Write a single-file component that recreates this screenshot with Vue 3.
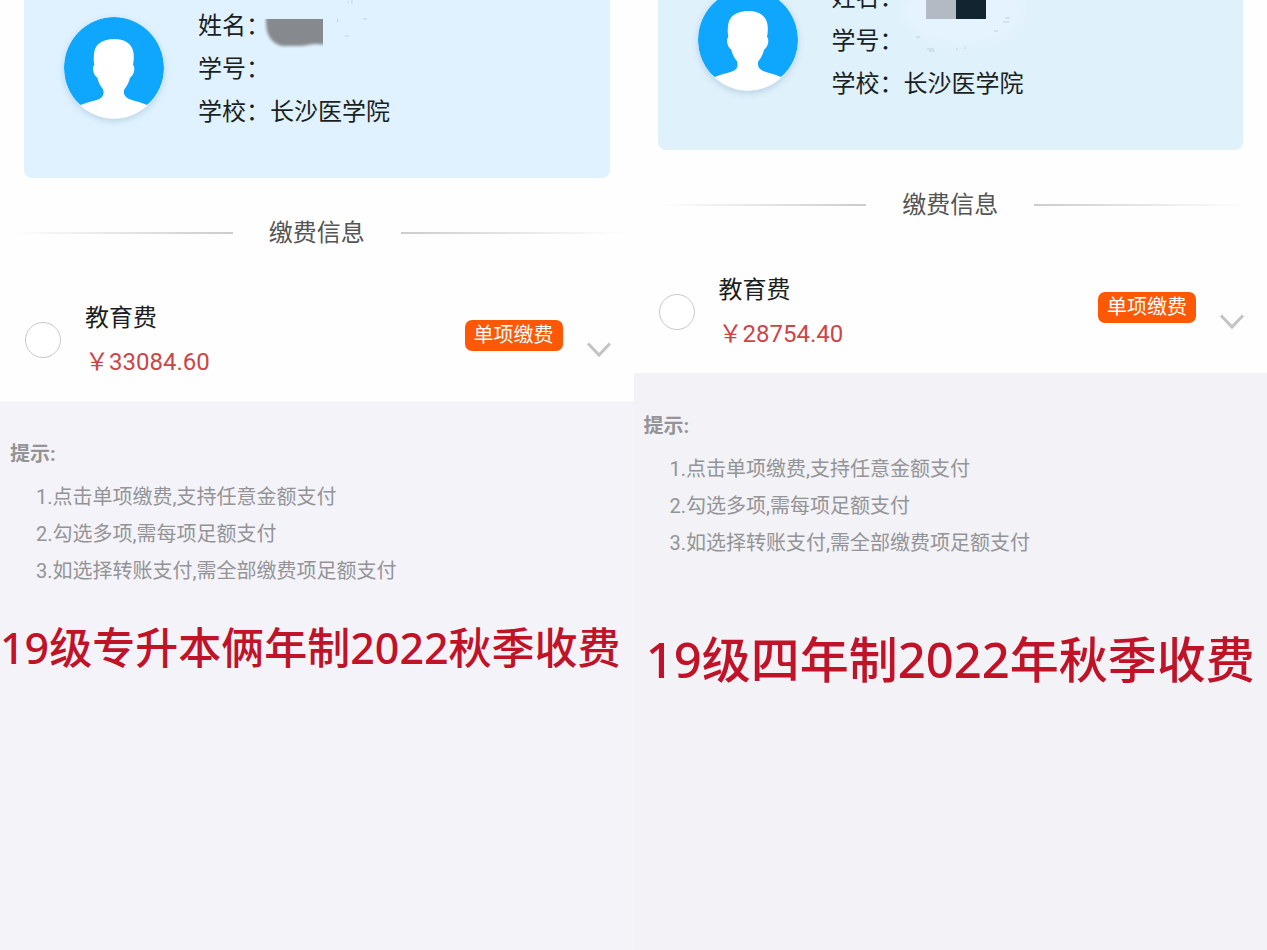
<script setup>
import { reactive } from 'vue'

const tips = [
  '1.点击单项缴费,支持任意金额支付',
  '2.勾选多项,需每项足额支付',
  '3.如选择转账支付,需全部缴费项足额支付',
]

const panels = reactive([
  { id: 'upgrade', price: '33084.60', checked: false, note: '19级专升本俩年制2022秋季收费' },
  { id: 'regular', price: '28754.40', checked: false, note: '19级四年制2022年秋季收费' },
])
</script>

<template>
  <main class="compare">
    <section v-for="p in panels" :key="p.id" class="panel" :class="p.id">
      <div class="sheet">
        <header class="card">
          <div class="profile">
            <svg class="avatar" viewBox="0 0 300 306" aria-hidden="true">
              <ellipse cx="150" cy="153" rx="149" ry="152" fill="#fff" />
              <path
                d="M50 264C18 236 0 196 0 152C0 68 68 0 150 0S300 68 300 152C300 196 281 236 249 264C232 257 212 252 195 246C182 240 177 230 181 217C189 207 195 196 198 182C205 178 211 168 211 156C211 149 209 146 207 144C210 130 210 116 208 104C203 79 181 66 150 66C118 66 94 81 91 104C89 116 88 130 91 144C88 147 87 150 87 156C88 169 93 178 100 182C103 196 109 207 117 217C121 230 118 240 106 246C89 252 68 256 50 264Z"
                fill="#0ea7fd"
              />
            </svg>
            <dl class="facts">
              <div class="fact">
                <dt>姓名：</dt>
                <dd>
                  <svg v-if="p.id === 'upgrade'" class="mask" width="190" height="60" viewBox="0 0 190 60" aria-hidden="true">
                    <defs>
                      <filter id="soften" x="-20%" y="-20%" width="140%" height="140%">
                        <feGaussianBlur stdDeviation="1.6" />
                      </filter>
                      <clipPath id="smudge"><path d="M0 19H59V60H0Z" /></clipPath>
                    </defs>
                    <g clip-path="url(#smudge)">
                      <path d="M2 12H70V45L50 44Q44 45 38 46H18Q2 42 2 22Z" fill="#868a8e" filter="url(#soften)" />
                    </g>
                    <path d="M81 36h4M99 19h4M84 1v2M88 0v4M73 22l1-3" fill="none" stroke="#c3d2dd" stroke-width="1" />
                  </svg>
                  <svg v-else class="mask" width="190" height="60" viewBox="0 0 190 60" aria-hidden="true">
                    <defs>
                      <filter id="fade" x="-20%" y="-20%" width="140%" height="140%">
                        <feGaussianBlur stdDeviation="5" />
                      </filter>
                    </defs>
                    <ellipse cx="65" cy="12" rx="62" ry="34" fill="#e4f3fd" filter="url(#fade)" />
                    <path d="M28 0H58V19H28Z" fill="#b3bac4" />
                    <path d="M58 0H88V19H58Z" fill="#11242f" />
                    <path d="M29 49h7M31 51h6M18 37h4M96 31h4M105 22h6M107 18h5M58 49h2M66 48h2" fill="none" stroke="#c0d0da" stroke-width="1" />
                  </svg>
                </dd>
              </div>
              <div class="fact"><dt>学号：</dt><dd></dd></div>
              <div class="fact"><dt>学校：</dt><dd>长沙医学院</dd></div>
            </dl>
          </div>
        </header>

        <h2 class="divider">缴费信息</h2>

        <div class="item">
          <input :id="p.id + '-fee'" v-model="p.checked" class="check" type="checkbox" />
          <label class="fee" :for="p.id + '-fee'">
            <span class="fee-name">教育费</span>
            <span class="fee-price">￥{{ p.price }}</span>
          </label>
          <button class="pay" type="button">单项缴费</button>
          <button class="expand" type="button" aria-label="展开">
            <svg width="24" height="16" viewBox="0 0 24 16" aria-hidden="true">
              <path d="M1 1.5L12 13L23 1.5" fill="none" stroke="#c3c3c3" stroke-width="3" />
            </svg>
          </button>
        </div>
      </div>

      <div class="tips">
        <h3>提示:</h3>
        <ul>
          <li v-for="t in tips" :key="t">{{ t }}</li>
        </ul>
      </div>

      <p class="note">{{ p.note }}</p>
    </section>
  </main>
</template>

<style>
body {
  margin: 0;
}
</style>

<style scoped>
.compare {
  display: grid;
  grid-template-columns: 1fr 1fr;
  min-height: 100vh;
  font-family: Roboto, "Noto Sans CJK SC", sans-serif;
  font-size: 24px;
  color: #1b1f22;
}
.panel {
  min-width: 0;
  overflow: hidden;
  background: #f4f3f9;
}
.regular {
  background: #f2f2f7;
}
.sheet {
  background: #fefefe;
  padding-bottom: 17px;
}
.card {
  display: flex;
  align-items: flex-end;
  height: 178px;
  box-sizing: border-box;
  margin: 0 24px;
  padding: 0 40px 44px;
  overflow: hidden;
  border-radius: 0 0 8px 8px;
  background: #e0f2ff;
}
.regular .card {
  height: 150px;
  background: #dff1fb;
}
.profile {
  display: flex;
  align-items: center;
  gap: 34px;
}
.avatar {
  width: 100px;
  height: 102px;
  margin-bottom: 3px;
  border-radius: 50%;
  box-shadow: 0 2px 6px rgba(90, 140, 175, 0.3);
}
.facts {
  margin: 0;
}
.fact {
  display: flex;
  height: 43px;
  line-height: 43px;
  white-space: nowrap;
}
.fact dd {
  margin: 0;
}
.mask {
  position: absolute;
  top: 0;
  margin-left: -6px;
}
.divider {
  display: flex;
  align-items: center;
  gap: 36px;
  margin: 37px 10px 45px;
  font-size: 24px;
  font-weight: 400;
  line-height: 36px;
  color: #555;
}
.regular .divider {
  margin-left: 24px;
  margin-right: 24px;
}
.divider::before,
.divider::after {
  content: "";
  flex: 1;
  height: 2px;
  background: linear-gradient(to right, transparent, #ccc);
}
.divider::after {
  background: linear-gradient(to left, transparent, #ccc);
}
.item {
  display: flex;
  align-items: center;
  padding: 0 23px 0 25px;
}
.check {
  appearance: none;
  width: 36px;
  height: 36px;
  margin: 0 24px 0 0;
  border: 1px solid #c8c8c8;
  border-radius: 50%;
  background: #fff;
}
.check:checked {
  background: #0ea7fd;
}
.fee {
  display: flex;
  flex: 1;
  flex-direction: column;
  line-height: 44px;
}
.fee-price {
  color: #cd4548;
}
.pay {
  margin: 0 24px 10px 0;
  padding: 0 9px;
  border: 0;
  border-radius: 7px;
  background: #fd5805;
  color: #fff;
  font-family: inherit;
  font-size: 20px;
  line-height: 31px;
}
.expand {
  display: flex;
  margin: 20px 0 0;
  padding: 0;
  border: 0;
  background: none;
}
.tips {
  padding: 35px 10px 0;
  font-size: 20px;
  line-height: 37px;
  color: #949496;
}
.tips h3 {
  margin: 0 0 6px;
  font-size: 20px;
  font-weight: 700;
}
.tips ul {
  margin: 0;
  padding: 0 0 0 26px;
  list-style: none;
}
.note {
  margin: 28px 0 0;
  padding-right: 16px;
  font-family: "Noto Sans", "Noto Sans CJK SC", sans-serif;
  font-size: 43px;
  font-weight: 500;
  line-height: 60px;
  text-align: center;
  white-space: nowrap;
  color: #c01328;
}
.regular .note {
  margin-top: 67px;
  padding-right: 0;
  font-size: 49px;
}
</style>
